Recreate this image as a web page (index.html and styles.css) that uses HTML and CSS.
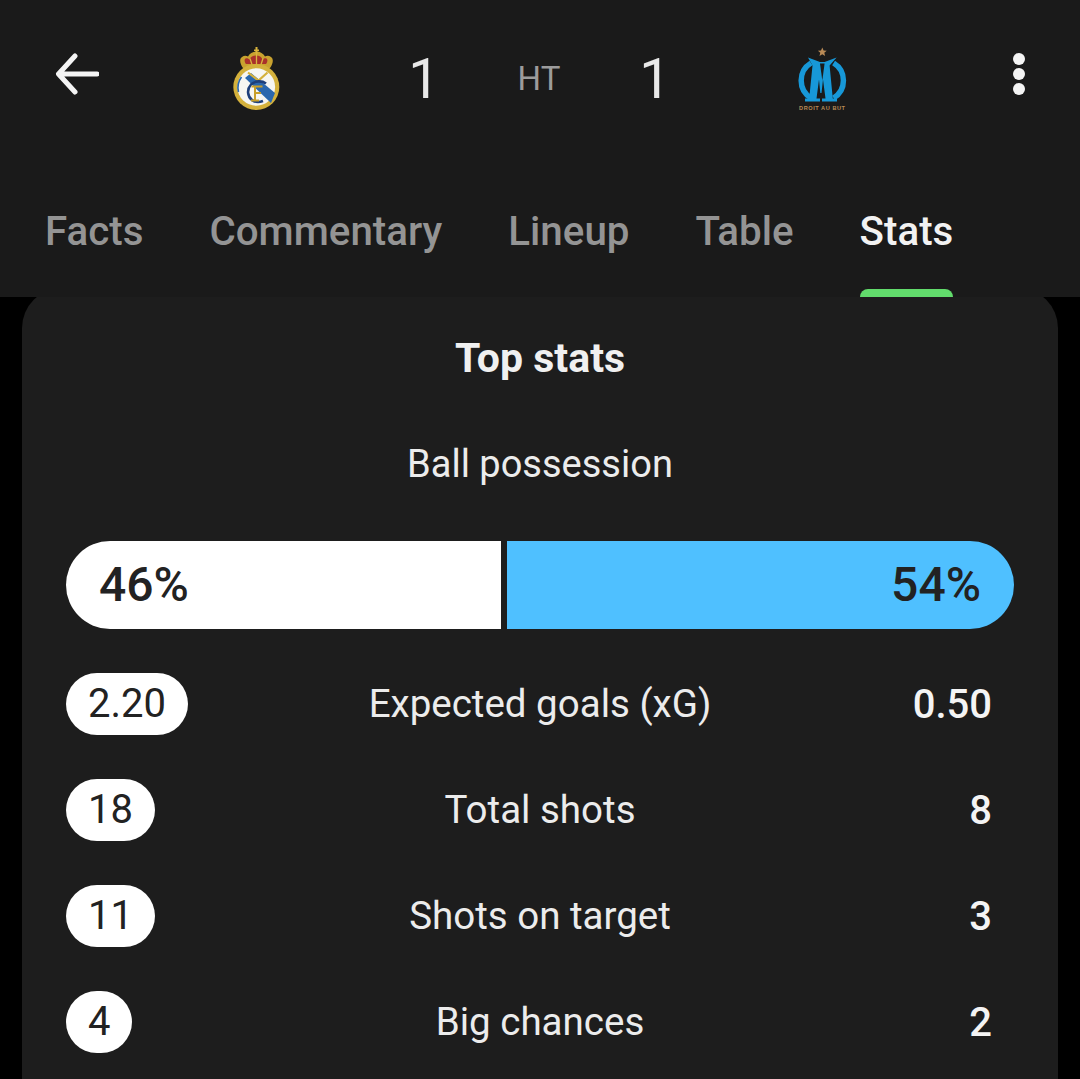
FILE: index.html
```html
<!DOCTYPE html>
<html lang="en">
<head>
<meta charset="utf-8">
<title>Match stats</title>
<link rel="stylesheet" href="styles.css">
</head>
<body>
<header class="match-header">
  <div class="score-row">
    <svg class="back" viewBox="0 0 44 44" aria-label="Back"><path d="M42 22H4M20 4 3.500 22 20 40" fill="none" stroke="#f4f4f4" stroke-width="5" stroke-linecap="round" stroke-linejoin="round"/></svg>
    <svg class="crest rm" viewBox="232 46 52 66" aria-label="Real Madrid">
      <path d="M244 68c-3-4-4-9-1-11 2-1.500 4-1.500 6-.5 1.500-3 5-5 8.500-5s7 2 8.500 5c2-1 4-1 6 .5 3 2 2 7-1 11z" fill="#c9a22f"/>
      <path d="M247 64c-1.500-2-2-4.500-.5-5.500 1.500-.8 3 0 4 1 1-2.500 3.500-4 6.500-4 3.500 0 5.500 1.500 6.500 4 1-1 2.500-1.800 4-1 1.500 1 1 3.500-.5 5.500z" fill="#a9312b"/>
      <path d="M256.500 47h2v2.500h1.500v1.500h-1.500v2.500h-2V51H255v-1.500h1.500z" fill="#d8b33c"/>
      <path d="M257.500 53v11M251 58.500l2 6M264 58.500l-2 6" stroke="#d9b53f" stroke-width="1.300" fill="none"/>
      <circle cx="257.300" cy="87" r="23" fill="#d4b13c"/>
      <circle cx="257.300" cy="87" r="18.800" fill="#f6f6f2"/>
      <path d="M246 78l6-5 24 20-4 10z" fill="#2a67ad"/>
      <path d="M249 72.500l10.500 8 9-8" fill="none" stroke="#d4b13c" stroke-width="2.200"/>
      <path d="M239.500 92a18 18 0 0 1 3-15" fill="none" stroke="#2a67ad" stroke-width="1.600"/>
      <path d="M267 83.500c-4-3-11-3-15 1-4.500 5-3.500 12 1 15.500 3 2.300 7 2.500 11 1" fill="none" stroke="#1d3f7a" stroke-width="2.600"/>
      <path d="M252.500 86.500h11M256 86.500v14M256 93h6M252 100.500h8" fill="none" stroke="#c79f2a" stroke-width="2"/>
    </svg>
    <span class="score">1</span>
    <span class="status">HT</span>
    <span class="score">1</span>
    <svg class="crest om" viewBox="795 46 56 66" aria-label="Olympique de Marseille">
      <path d="m822.300 47.500 1.300 2.900 3.100.3-2.400 2.100.8 3.100-2.800-1.700-2.800 1.700.8-3.100-2.400-2.100 3.100-.3z" fill="#b98a56"/>
      <path d="M811 63a20.500 20.500 0 0 0 0 35M833.600 63a20.500 20.500 0 0 1 0 35" fill="none" stroke="#1798d8" stroke-width="5.500"/>
      <path d="M808 57.500l12 4.500h4.600l12-4.500-7 8 3.200 33 4.200 0v3h-15l0-3h3.500l-2.500-19-1.500 13.500h-1.200L819 79.500l-2.500 19h3.500v3h-15v-3h4.200l3.300-33z" fill="#1798d8"/>
      <path d="M820 63.500l2.300 17 2.300-17z" fill="#1a1a1a"/>
      <text x="822.300" y="110" class="om-motto">DROIT AU BUT</text>
    </svg>
    <svg class="more" viewBox="0 0 44 44" aria-label="More"><circle cx="22" cy="7" r="6" fill="#f4f4f4"/><circle cx="22" cy="22" r="6" fill="#f4f4f4"/><circle cx="22" cy="37" r="6" fill="#f4f4f4"/></svg>
  </div>
  <nav class="tabs">
    <span class="tab">Facts</span>
    <span class="tab">Commentary</span>
    <span class="tab">Lineup</span>
    <span class="tab">Table</span>
    <span class="tab active">Stats</span>
  </nav>
</header>
<main class="card">
  <h1 class="card-title">Top stats</h1>
  <p class="possession-label">Ball possession</p>
  <div class="possession">
    <div class="side home" style="flex-grow:369">46%</div>
    <div class="side away" style="flex-grow:441">54%</div>
  </div>
  <ul class="stats">
    <li class="stat"><span class="value pill">2.20</span><span class="label">Expected goals (xG)</span><span class="value right">0.50</span></li>
    <li class="stat"><span class="value pill">18</span><span class="label">Total shots</span><span class="value right">8</span></li>
    <li class="stat"><span class="value pill">11</span><span class="label">Shots on target</span><span class="value right">3</span></li>
    <li class="stat"><span class="value pill">4</span><span class="label">Big chances</span><span class="value right">2</span></li>
  </ul>
</main>
</body>
</html>
```
FILE: styles.css
```css
* { box-sizing: border-box; }
html, body { margin: 0; height: 100%; overflow: hidden; background: #000; }
body { font-family: Roboto, "Noto Sans", sans-serif; color: #f2f2f2; }

.match-header {
  position: relative;
  z-index: 1;
  height: 297px;
  background: #1a1a1a;
  display: flex;
  flex-direction: column;
  justify-content: space-between;
  overflow: hidden;
}
.score-row {
  display: grid;
  grid-template-columns: 154px 206px 128px 102px 130px 206px 1fr;
  align-items: center;
  justify-items: center;
  height: 64px;
  margin-top: 46px;
}
.back { width: 44px; height: 44px; margin-top: -10px; }
.crest { display: block; }
.rm { width: 52px; height: 66px; }
.om { width: 56px; height: 66px; }
.om-motto { font: 700 5.600px "Liberation Sans", sans-serif; fill: #b98a56; text-anchor: middle; letter-spacing: .55px; }
.more { width: 44px; height: 44px; justify-self: end; margin: -10px 39px 0 0; }
.score { font-size: 56px; line-height: 64px; color: #e8e8e8; }
.status { font-size: 33px; line-height: 64px; color: #9c9c9c; }

.tabs { display: flex; gap: 66px; padding-left: 45px; }
.tab {
  display: flex;
  flex-direction: column;
  font-size: 40.300px;
  font-weight: 500;
  line-height: 43px;
  color: #949494;
}
.tab::after {
  content: "";
  height: 8px;
  margin-top: 36px;
  border-radius: 8px 8px 0 0;
}
.tab.active { color: #f2f2f2; }
.tab.active::after { background: #62dc6c; }

.card {
  margin: -9px 22px 0;
  padding: 48px 44px 0;
  height: 791px;
  background: #1d1d1d;
  border-radius: 40px 40px 0 0;
}
.card-title {
  margin: 0;
  text-align: center;
  font-size: 41px;
  font-weight: 700;
  line-height: 44px;
  color: #f0f0f0;
}
.possession-label {
  margin: 62px 0 0;
  text-align: center;
  font-size: 38px;
  line-height: 44px;
  color: #ececec;
}
.possession {
  display: flex;
  gap: 6px;
  height: 88px;
  margin-top: 55px;
}
.side {
  flex: 1 1 0;
  padding: 0 33px;
  font-size: 48px;
  font-weight: 500;
  line-height: 88px;
  color: #222;
}
.home { background: #fff; border-radius: 44px 0 0 44px; }
.away { background: #4fc0ff; border-radius: 0 44px 44px 0; text-align: right; }

.stats {
  list-style: none;
  margin: 44px 0 0;
  padding: 0;
  display: flex;
  flex-direction: column;
  gap: 44px;
}
.stat {
  position: relative;
  display: flex;
  justify-content: space-between;
  align-items: center;
  height: 62px;
}
.label {
  position: absolute;
  top: 7px;
  left: 0;
  right: 0;
  text-align: center;
  font-size: 38.500px;
  line-height: 48px;
  color: #ececec;
}
.value { font-size: 40px; }
.pill {
  padding: 0 22px;
  min-width: 66px;
  height: 62px;
  line-height: 62px;
  text-align: center;
  border-radius: 31px;
  background: #fff;
  color: #222;
}
.right { padding-right: 22px; font-weight: 500; color: #f4f4f4; }
```
